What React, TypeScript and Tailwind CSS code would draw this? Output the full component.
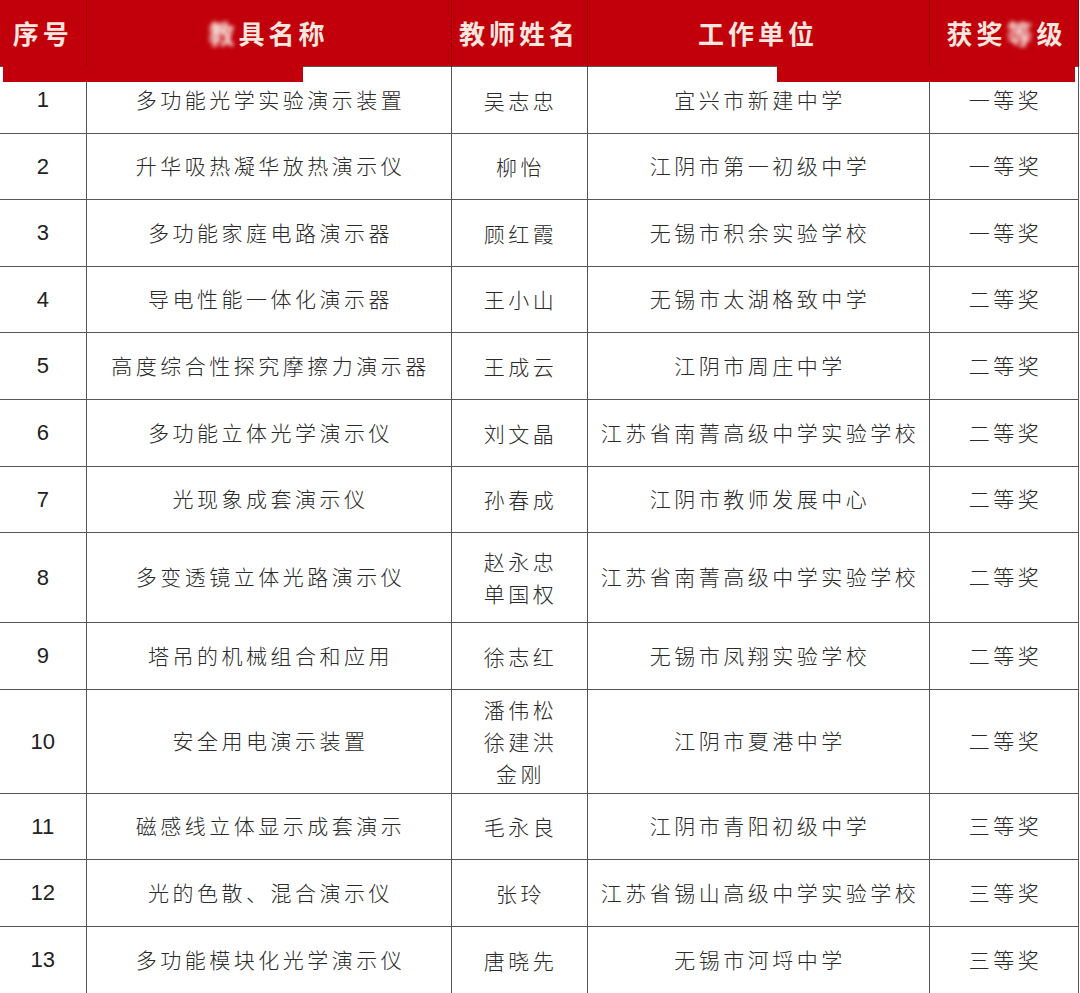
type Row = {
    no: string;
    name: string;
    teachers: string[];
    unit: string;
    award: string;
    h: string;
};

const rows: Row[] = [
    { no: '1', name: '多功能光学实验演示装置', teachers: ['吴志忠'], unit: '宜兴市新建中学', award: '一等奖', h: 'h-[67px]' },
    { no: '2', name: '升华吸热凝华放热演示仪', teachers: ['柳怡'], unit: '江阴市第一初级中学', award: '一等奖', h: 'h-[66px]' },
    { no: '3', name: '多功能家庭电路演示器', teachers: ['顾红霞'], unit: '无锡市积余实验学校', award: '一等奖', h: 'h-[67px]' },
    { no: '4', name: '导电性能一体化演示器', teachers: ['王小山'], unit: '无锡市太湖格致中学', award: '二等奖', h: 'h-[66px]' },
    { no: '5', name: '高度综合性探究摩擦力演示器', teachers: ['王成云'], unit: '江阴市周庄中学', award: '二等奖', h: 'h-[67px]' },
    { no: '6', name: '多功能立体光学演示仪', teachers: ['刘文晶'], unit: '江苏省南菁高级中学实验学校', award: '二等奖', h: 'h-[67px]' },
    { no: '7', name: '光现象成套演示仪', teachers: ['孙春成'], unit: '江阴市教师发展中心', award: '二等奖', h: 'h-[66px]' },
    { no: '8', name: '多变透镜立体光路演示仪', teachers: ['赵永忠', '单国权'], unit: '江苏省南菁高级中学实验学校', award: '二等奖', h: 'h-[90px]' },
    { no: '9', name: '塔吊的机械组合和应用', teachers: ['徐志红'], unit: '无锡市凤翔实验学校', award: '二等奖', h: 'h-[67px]' },
    { no: '10', name: '安全用电演示装置', teachers: ['潘伟松', '徐建洪', '金刚'], unit: '江阴市夏港中学', award: '二等奖', h: 'h-[104px]' },
    { no: '11', name: '磁感线立体显示成套演示', teachers: ['毛永良'], unit: '江阴市青阳初级中学', award: '三等奖', h: 'h-[66px]' },
    { no: '12', name: '光的色散、混合演示仪', teachers: ['张玲'], unit: '江苏省锡山高级中学实验学校', award: '三等奖', h: 'h-[67px]' },
    { no: '13', name: '多功能模块化光学演示仪', teachers: ['唐晓先'], unit: '无锡市河埒中学', award: '三等奖', h: 'h-[67px]' },
];

const cjk = "font-['Noto_Sans_CJK_SC',sans-serif]";
const headCell =
    "bg-[#c1000b] border-r-[1.5px] border-[#9a0008] text-[#f9e6df] text-[26px] font-bold tracking-[4px] text-center align-middle " + cjk;
const bodyCell =
    'border-[1.5px] border-[#555] text-center align-middle text-[#2a2a2a] text-[21px] font-light tracking-[3.5px] ' + cjk;

export default function App() {
    return (
        <div className="relative w-[1080px] h-[993px] overflow-hidden bg-white">
            <table className="w-[1078px] table-fixed border-collapse">
                <colgroup>
                    <col className="w-[86px]" />
                    <col className="w-[365px]" />
                    <col className="w-[136px]" />
                    <col className="w-[342px]" />
                    <col className="w-[149px]" />
                </colgroup>
                <thead>
                    <tr className="h-[66px]">
                        <th className={headCell}>序号</th>
                        <th className={headCell}>
                            <span className="blur-[2px]">教</span>具名称
                        </th>
                        <th className={headCell}>教师姓名</th>
                        <th className={headCell}>工作单位</th>
                        <th className={headCell + ' pl-[6px]'}>
                            获奖<span className="blur-[2px]">等</span>级
                        </th>
                    </tr>
                </thead>
                <tbody>
                    {rows.map((r) => (
                        <tr key={r.no} className={r.h}>
                            <td className="border-[1.5px] border-l-0 border-[#555] text-center align-middle text-[#222] text-[22px] font-['Liberation_Sans',Arial,sans-serif]">
                                {r.no}
                            </td>
                            <td className={bodyCell + ' pl-[4px]'}>{r.name}</td>
                            <td className={bodyCell + ' pl-[3px] leading-[32px]'}>
                                {r.teachers.map((t) => (
                                    <div key={t}>{t}</div>
                                ))}
                            </td>
                            <td className={bodyCell + ' pl-[4px]'}>{r.unit}</td>
                            <td className={bodyCell + ' pl-[4px]'}>{r.award}</td>
                        </tr>
                    ))}
                </tbody>
            </table>
            {/* red strips spilling from the header onto the first row */}
            <div className="absolute left-[3px] top-[66px] w-[300px] h-[16px] bg-[#c1000b]" />
            <div className="absolute left-[777px] top-[66px] w-[298px] h-[16px] bg-[#c1000b]" />
        </div>
    );
}
